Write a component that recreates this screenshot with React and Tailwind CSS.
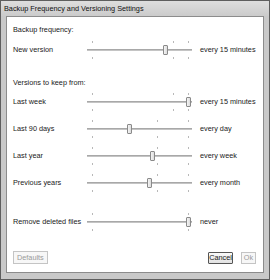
import React from 'react';

// Each slider: thumb position (px from track start) and tick marks
const ROWS = [
  { label: 'Last week', value: 'every 15 minutes', thumb: 101, ticks: [5, 86, 101] },
  { label: 'Last 90 days', value: 'every day', thumb: 42, ticks: [5, 70, 101] },
  { label: 'Last year', value: 'every week', thumb: 65, ticks: [5, 70, 101] },
  { label: 'Previous years', value: 'every month', thumb: 62, ticks: [5, 70, 101] },
];

function Slider({ thumb, ticks }) {
  return (
    <div className="relative w-[105px] h-[18px]">
      {ticks.map((t, i) => (
        <React.Fragment key={i}>
          <div className="absolute top-0 w-px h-[2px] bg-[#b8b8b8]" style={{ left: t }} />
          <div className="absolute bottom-0 w-px h-[2px] bg-[#b8b8b8]" style={{ left: t }} />
        </React.Fragment>
      ))}
      <div className="absolute left-0 right-0 top-[8px] h-[2px] bg-[#c4c4c4] border-t border-[#a8a8a8]" />
      <div
        className="absolute top-[4px] w-[5px] h-[10px] rounded-[1px] border border-[#8a8a8a] bg-gradient-to-r from-[#f4f4f4] to-[#dcdcdc]"
        style={{ left: thumb - 2 }}
      />
    </div>
  );
}

function Row({ label, value, thumb, ticks, className = '' }) {
  return (
    <div className={`flex items-center h-[18px] ${className}`}>
      <div className="w-[74px]">{label}</div>
      <Slider thumb={thumb} ticks={ticks} />
      <div className="ml-[8px]">{value}</div>
    </div>
  );
}

export default function App() {
  return (
    <div
      className="w-[270px] h-[280px] bg-[#c9c9c9] border border-[#5e5e5e] flex flex-col text-[7.3px] leading-[10px] text-[#1a1a1a]"
      style={{ fontFamily: '"Liberation Sans", Arial, sans-serif' }}
    >
      <div className="h-[15px] px-[3px] flex items-center bg-gradient-to-b from-[#dedede] to-[#cbcbcb] text-[#111]">
        Backup Frequency and Versioning Settings
      </div>
      <div className="flex-1 mx-[5px] mb-[6px] bg-white border border-[#8c8c8c] flex flex-col pl-[6px] pr-[7px] pt-[8px]">
        <div className="h-[10px]">Backup frequency:</div>
        <Row label="New version" value="every 15 minutes" thumb={78} ticks={[5, 86, 101]} className="mt-[6px]" />

        <div className="h-[10px] mt-[19px]">Versions to keep from:</div>
        <div className="flex flex-col gap-[9px] mt-[5px]">
          {ROWS.map((r) => (
            <Row key={r.label} {...r} />
          ))}
        </div>

        <Row label="Remove deleted files" value="never" thumb={101} ticks={[5, 101]} className="mt-[21px]" />

        <div className="flex items-center mt-[20px]">
          <div className="h-[13px] px-[3px] flex items-center border border-[#c4c4c4] bg-[#f7f7f7] text-[#9a9a9a]">
            Defaults
          </div>
          <div className="flex-1" />
          <div className="h-[12px] w-[25px] flex items-center justify-center border border-[#555] rounded-[1px] bg-gradient-to-b from-[#fafafa] to-[#e2e2e2]">
            Cancel
          </div>
          <div className="h-[12px] w-[15px] ml-[8px] flex items-center justify-center border border-[#c4c4c4] bg-[#f7f7f7] text-[#9a9a9a]">
            Ok
          </div>
        </div>
      </div>
    </div>
  );
}
